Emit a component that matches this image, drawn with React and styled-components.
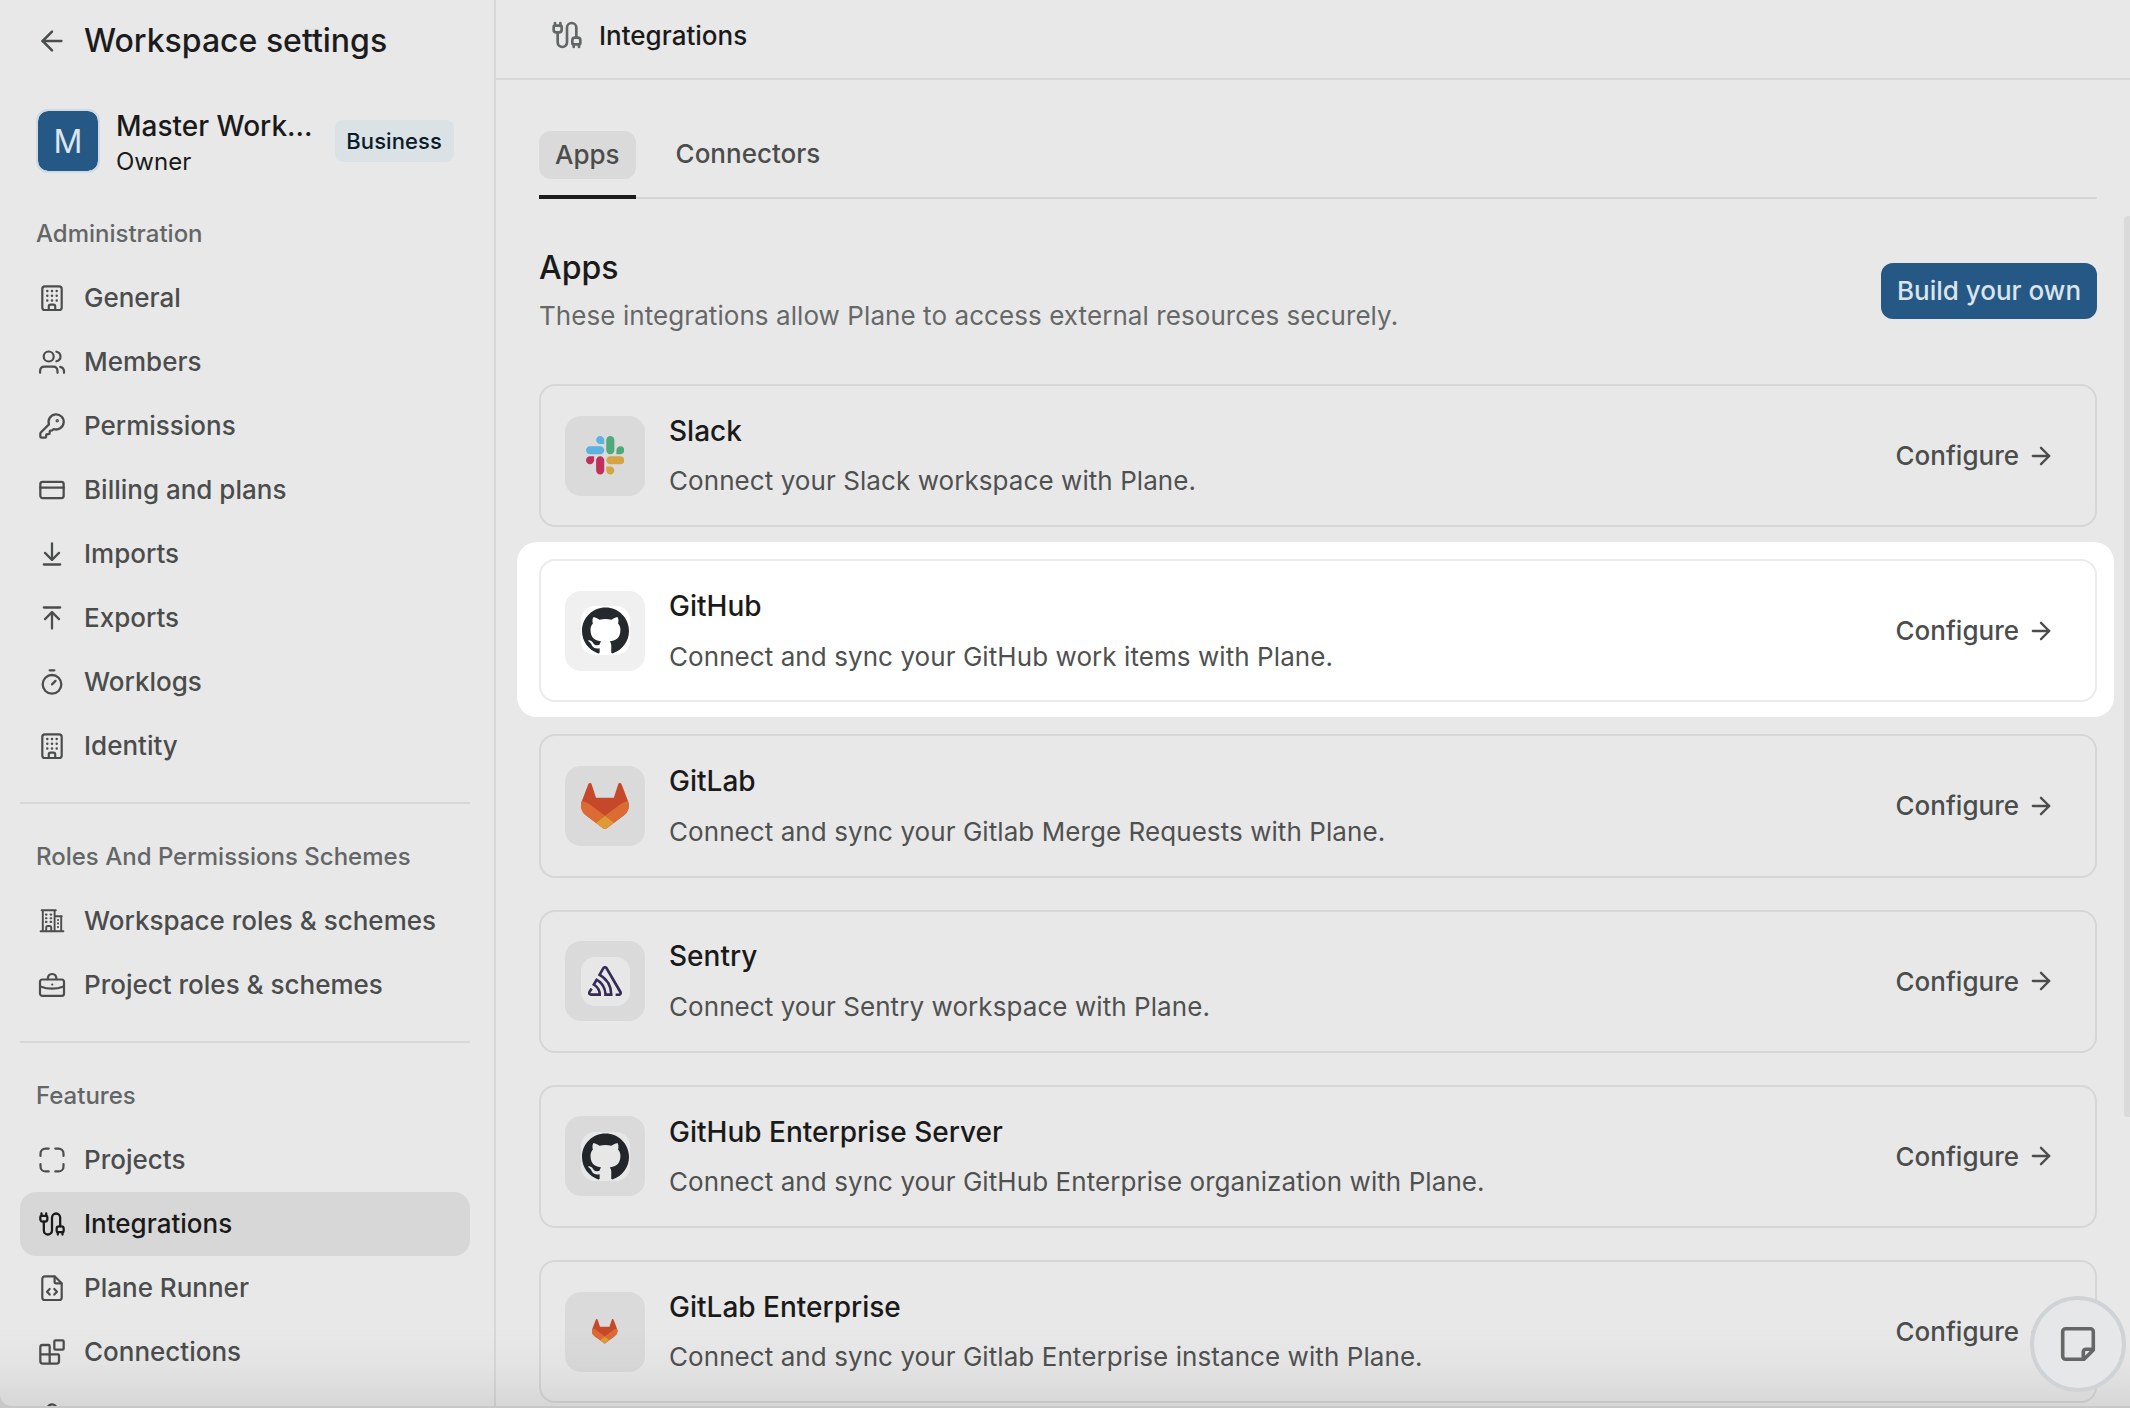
import React from 'react'
import styled, { createGlobalStyle } from 'styled-components'
import {
  ArrowDownToLine,
  ArrowLeft,
  ArrowRight,
  ArrowUpToLine,
  Blocks,
  Cable,
  CreditCard,
  KeyRound,
  Timer,
  Webhook
} from 'lucide-react'
import { SiGithub, SiSentry } from 'react-icons/si'

const GlobalStyle = createGlobalStyle`
  * {
    box-sizing: border-box;
  }

  body {
    margin: 0;
    background: #c8c8c8;
    font-family: 'Inter', sans-serif;
    overflow: hidden;
  }
`

const Page = styled.div`
  position: relative;
  display: flex;
  width: 100vw;
  height: calc(100vh - 2px);
  overflow: hidden;
  background: #e8e8e8;
  border-bottom-left-radius: 12px;
  color: #1a1a1a;
`

const Sidebar = styled.aside`
  width: 496px;
  flex-shrink: 0;
  padding: 0 24px 0 20px;
  border-right: 2px solid #d8d8d8;
`

const SidebarHeader = styled.div`
  display: flex;
  align-items: center;
  gap: 16px;
  height: 81px;
  padding-left: 16px;
  color: #4b4d4d;
`

const SidebarTitle = styled.h1`
  margin: 0;
  font-size: 32px;
  line-height: 40px;
  font-weight: 500;
  color: #1c1c1c;
`

const Workspace = styled.div`
  display: flex;
  align-items: center;
  height: 120px;
  margin-bottom: 13px;
  padding: 0 16px;
`

const Avatar = styled.div`
  display: flex;
  align-items: center;
  justify-content: center;
  width: 64px;
  height: 64px;
  margin-right: 16px;
  border: 2px solid #cfdbe4;
  border-radius: 12px;
  background: #255885;
  background-clip: padding-box;
  color: #dde6ed;
  font-size: 32px;
`

const WorkspaceInfo = styled.div`
  flex: 1;
  padding-top: 4px;
  white-space: nowrap;
`

const WorkspaceName = styled.div`
  font-size: 28px;
  line-height: 36px;
  font-weight: 500;
`

const WorkspaceRole = styled.div`
  font-size: 24px;
  line-height: 35px;
`

const Plan = styled.span`
  padding: 0 12px 0 11px;
  border-radius: 8px;
  background: #dae2e6;
  color: #0c1b28;
  font-size: 22px;
  line-height: 42px;
  font-weight: 500;
  letter-spacing: 0.1px;
`

const Group = styled.nav`
  & + & {
    margin-top: 24px;
    padding-top: 33px;
    border-top: 2px solid #d6d7d7;
  }
`

const GroupLabel = styled.div`
  margin-bottom: 12px;
  padding-left: 16px;
  color: #636666;
  font-size: 24px;
  line-height: 40px;
  font-weight: 500;
`

const NavItem = styled.a`
  display: flex;
  align-items: center;
  gap: 16px;
  height: 64px;
  padding-left: 16px;
  border-radius: 16px;
  background: ${props => props.$active ? '#d7d7d7' : 'transparent'};
  color: ${props => props.$active ? '#1a1a1a' : '#4b4d4d'};
  font-size: 26px;
  font-weight: 500;
  white-space: nowrap;
`

const IconBox = styled.span`
  display: flex;
  align-items: center;
  justify-content: center;
  flex-shrink: 0;
  width: 32px;
  height: 32px;
`

const NavLabel = styled.span`
  padding-bottom: 2px;
`

const Main = styled.main`
  flex: 1;
  min-width: 0;
`

const Header = styled.header`
  display: flex;
  align-items: center;
  gap: 16px;
  height: 80px;
  padding: 0 0 8px 55px;
  border-bottom: 2px solid #d8d8d8;
  color: #636666;
  font-size: 26px;
  font-weight: 500;

  & > span {
    color: #1a1a1a;
  }
`

const Content = styled.div`
  padding: 51px 33px 0 43px;
`

const Tabs = styled.div`
  display: flex;
  gap: 24px;
  height: 68px;
  border-bottom: 2px solid #d3d5d5;
`

const Tab = styled.div`
  height: 68px;
  border-bottom: 4px solid ${props => props.$active ? '#1c1c1c' : 'transparent'};

  & > span {
    display: block;
    padding: ${props => props.$active ? '0 16px' : '0 16px 2px'};
    border-radius: 12px;
    background: ${props => props.$active ? '#dadada' : 'transparent'};
    color: #4b4d4d;
    font-size: 26px;
    line-height: ${props => props.$active ? '48px' : '46px'};
    font-weight: 500;
  }
`

const Intro = styled.div`
  display: flex;
  align-items: center;
  justify-content: space-between;
  height: 185px;
  padding-bottom: 2px;
`

const IntroBody = styled.div`
  padding-top: 3px;
`

const IntroTitle = styled.h2`
  margin: 0;
  font-size: 32px;
  line-height: 48px;
  font-weight: 500;
`

const IntroText = styled.p`
  margin: 0;
  color: #666868;
  font-size: 26px;
  line-height: 48px;
  letter-spacing: 0.07px;
`

const PrimaryButton = styled.button`
  width: 216px;
  height: 56px;
  padding: 0;
  border: none;
  border-radius: 12px;
  background: #255885;
  color: #dbe4ec;
  font: 500 26px 'Inter', sans-serif;
`

const CardList = styled.div`
  display: flex;
  flex-direction: column;
  gap: 32px;
`

const Card = styled.div`
  display: flex;
  align-items: center;
  gap: 24px;
  height: 143.2px;
  padding: 0 40px 0 24px;
  border: 2px solid ${props => props.$highlighted ? '#ebebeb' : '#d5d6d6'};
  border-radius: 16px;
`

// white plate that reaches past the card into the gaps around it
const Spotlight = styled.div`
  margin: -17px -17px -15px -22px;
  padding: 17px 17px 15px 22px;
  border-radius: 20px;
  background: #fff;
`

const Logo = styled.div`
  display: flex;
  align-items: center;
  justify-content: center;
  width: 80px;
  height: 80px;
  border-radius: 16px;
  background: ${props => props.$highlighted ? '#f0f0f1' : '#dadada'};
`

const LogoPlate = styled.span`
  display: flex;
  align-items: center;
  justify-content: center;
  width: 49px;
  height: 49px;
  border-radius: 14px;
  background: ${props => props.$highlighted ? '#fff' : '#e7e7e8'};
`

const CardBody = styled.div`
  flex: 1;
`

const CardTitle = styled.h3`
  margin: 0 0 9.5px;
  font-size: 28px;
  line-height: 42px;
  font-weight: 500;
`

const CardText = styled.p`
  margin: 0;
  color: #4f5151;
  font-size: 26px;
  line-height: 40px;
  letter-spacing: 0.07px;
`

const Configure = styled.a`
  display: flex;
  align-items: center;
  gap: 8px;
  color: #4b4d4d;
  font-size: 26px;
  font-weight: 500;
`

const Scrollbar = styled.div`
  position: absolute;
  top: 216px;
  right: 0;
  width: 6px;
  height: 901px;
  border-radius: 4px 0 0 4px;
  background: #dadada;
`

const BottomFade = styled.div`
  position: absolute;
  right: 0;
  bottom: 0;
  left: 0;
  height: 76px;
  background: linear-gradient(rgba(0, 0, 0, 0), rgba(0, 0, 0, 0.02) 45%, rgba(0, 0, 0, 0.075));
`

const NoteButton = styled.button`
  position: absolute;
  right: 4px;
  bottom: 14px;
  display: flex;
  align-items: center;
  justify-content: center;
  width: 96px;
  height: 96px;
  padding: 0;
  border: 4px solid #d0d3d5;
  border-radius: 50%;
  background: #e5e7e8;
  color: #656767;
`

const Svg = ({ children, stroke = 2.2 }) => (
  <svg
    width='32'
    height='32'
    viewBox='0 0 32 32'
    fill='none'
    stroke='currentColor'
    strokeWidth={stroke}
    strokeLinecap='round'
    strokeLinejoin='round'
  >
    {children}
  </svg>
)

const OfficeIcon = () => (
  <Svg>
    <rect x='6.3' y='4.3' width='19.4' height='23.7' rx='2.6' />
    <path d='M12.8 27.5v-3.2a1.6 1.6 0 0 1 1.6-1.6h3.2a1.6 1.6 0 0 1 1.6 1.6v3.2' />
    <path strokeWidth='2.5' d='M11.3 9h.01M16 9h.01M20.7 9h.01M11.3 13.7h.01M16 13.7h.01M20.7 13.7h.01M11.3 18.4h.01M16 18.4h.01M20.7 18.4h.01' />
  </Svg>
)

const MembersIcon = () => (
  <Svg>
    <circle cx='12.7' cy='10.5' r='5' />
    <path d='M4.1 26.8v-1.6c0-3 1.9-4.5 4.5-4.5h8.4c2.7 0 4.5 1.6 4.5 4.5v1.6' />
    <path d='M20.4 5.7c2.6.6 4.1 2.4 4.1 4.8s-1.5 4.1-4.1 4.8' />
    <path d='M24.2 20.9c2.4.7 3.8 2.2 3.8 4.5v1.4' />
  </Svg>
)

const TowersIcon = () => (
  <Svg stroke={1.9}>
    <path d='M4.6 26.2h22.8M5.6 5.2h14.2M6.8 5.2v21M18.6 5.2v21M18.6 11.2h7.2M25.2 11.2v15' />
    <path d='M10.2 26v-3.3a1.7 1.7 0 0 1 1.7-1.7h1.6a1.7 1.7 0 0 1 1.7 1.7v3.3' />
    <path strokeWidth='2.1' d='M9.9 9.6h.6M14.6 9.6h.6M9.9 13.2h.6M14.6 13.2h.6M9.9 16.9h.6M14.6 16.9h.6M22 15h.01M22 18.4h.01M22 22h.01' />
  </Svg>
)

const BriefcaseIcon = () => (
  <Svg>
    <rect x='4' y='10.5' width='24' height='16.4' rx='2.4' />
    <path d='M11.8 10.2c0-3.2 1.6-5.2 4.3-5.2s4.3 2 4.3 5.2' />
    <path d='M4.4 17.4c7 2.8 16.2 2.8 23.2 0' />
    <path d='M16.2 15.6h.01' />
  </Svg>
)

const ProjectsIcon = () => (
  <Svg>
    <path d='M4.5 12V9.6a5 5 0 0 1 5-5h3.2M19.3 4.6h3.2a5 5 0 0 1 5 5V12M27.5 20v2.4a5 5 0 0 1-5 5h-3.2M12.7 27.4H9.5a5 5 0 0 1-5-5V20' />
  </Svg>
)

const RunnerIcon = () => (
  <Svg>
    <path d='M18.6 4.3H8.9a2.6 2.6 0 0 0-2.6 2.6v18.5A2.6 2.6 0 0 0 8.9 28h14.2a2.6 2.6 0 0 0 2.6-2.6V11.2z' />
    <path d='M18.6 4.6v5.2a1.5 1.5 0 0 0 1.5 1.5h5.3' />
    <path d='m13.7 17-2.7 2.8 2.7 2.8M18.3 17l2.7 2.8-2.7 2.8' />
  </Svg>
)

const SlackLogo = () => (
  <svg width='38.5' height='38.5' viewBox='0 0 122.8 122.8'>
    <path fill='#c12f5b' d='M25.8 77.6c0 7.1-5.8 12.9-12.9 12.9S0 84.7 0 77.6s5.8-12.9 12.9-12.9h12.9v12.9zM32.3 77.6c0-7.1 5.8-12.9 12.9-12.9s12.9 5.8 12.9 12.9v32.3c0 7.1-5.8 12.9-12.9 12.9s-12.9-5.8-12.9-12.9V77.6z' />
    <path fill='#5bb2de' d='M45.2 25.8c-7.1 0-12.9-5.8-12.9-12.9S38.1 0 45.2 0s12.9 5.8 12.9 12.9v12.9H45.2zM45.2 32.3c7.1 0 12.9 5.8 12.9 12.9s-5.8 12.9-12.9 12.9H12.9C5.8 58.1 0 52.3 0 45.2s5.8-12.9 12.9-12.9h32.3z' />
    <path fill='#4eaa7a' d='M97 45.2c0-7.1 5.8-12.9 12.9-12.9s12.9 5.8 12.9 12.9-5.8 12.9-12.9 12.9H97V45.2zM90.5 45.2c0 7.1-5.8 12.9-12.9 12.9s-12.9-5.8-12.9-12.9V12.9C64.7 5.8 70.5 0 77.6 0s12.9 5.8 12.9 12.9v32.3z' />
    <path fill='#d5a443' d='M77.6 97c7.1 0 12.9 5.8 12.9 12.9s-5.8 12.9-12.9 12.9-12.9-5.8-12.9-12.9V97h12.9zM77.6 90.5c-7.1 0-12.9-5.8-12.9-12.9s5.8-12.9 12.9-12.9h32.3c7.1 0 12.9 5.8 12.9 12.9s-5.8 12.9-12.9 12.9H77.6z' />
  </svg>
)

const GitlabLogo = ({ size }) => (
  <svg width={size} height={size * 0.96} viewBox='0 0 25 24'>
    <path fill='#c6482b' d='m24.507 9.5-.034-.09L21.082.562a.896.896 0 0 0-1.694.091l-2.29 7.01H7.825L5.535.653a.898.898 0 0 0-1.694-.09L.451 9.411.416 9.5a6.297 6.297 0 0 0 2.09 7.278l.012.01.03.022 5.16 3.867 2.56 1.935 1.554 1.176a1.051 1.051 0 0 0 1.268 0l1.555-1.176 2.56-1.935 5.197-3.89.014-.01A6.297 6.297 0 0 0 24.507 9.5Z' />
    <path fill='#dc6b33' d='m24.507 9.5-.034-.09a11.44 11.44 0 0 0-4.56 2.051l-7.447 5.632 4.742 3.584 5.197-3.89.014-.01A6.297 6.297 0 0 0 24.507 9.5Z' />
    <path fill='#dd9a37' d='m7.707 20.677 2.56 1.935 1.555 1.176a1.051 1.051 0 0 0 1.268 0l1.555-1.176 2.56-1.935-4.743-3.584-4.755 3.584Z' />
    <path fill='#dc6b33' d='M5.01 11.461a11.43 11.43 0 0 0-4.56-2.05L.416 9.5a6.297 6.297 0 0 0 2.09 7.278l.012.01.03.022 5.16 3.867 4.745-3.584-7.444-5.632Z' />
  </svg>
)

const NoteIcon = () => (
  <svg width='36' height='36' viewBox='0 0 36 36' fill='none' stroke='currentColor' strokeWidth='3.6' strokeLinejoin='round'>
    <path d='M5.7 2.7h24.6a3 3 0 0 1 3 3v18.3l-9.3 9.3H5.700a3 3 0 0 1-3-3V5.700a3 3 0 0 1 3-3z' />
    <path d='M23.3 33v-7.2a2.5 2.5 0 0 1 2.5-2.5h7.2' />
  </svg>
)

const lucide = Icon => () => <Icon size={28} strokeWidth={1.95} />

const groups = [
  {
    label: 'Administration',
    items: [
      { name: 'General', icon: OfficeIcon },
      { name: 'Members', icon: MembersIcon },
      { name: 'Permissions', icon: lucide(KeyRound) },
      { name: 'Billing and plans', icon: lucide(CreditCard) },
      { name: 'Imports', icon: lucide(ArrowDownToLine) },
      { name: 'Exports', icon: lucide(ArrowUpToLine) },
      { name: 'Worklogs', icon: lucide(Timer) },
      { name: 'Identity', icon: OfficeIcon }
    ]
  },
  {
    label: 'Roles And Permissions Schemes',
    items: [
      { name: 'Workspace roles & schemes', icon: TowersIcon },
      { name: 'Project roles & schemes', icon: BriefcaseIcon }
    ]
  },
  {
    label: 'Features',
    items: [
      { name: 'Projects', icon: ProjectsIcon },
      { name: 'Integrations', icon: lucide(Cable), active: true },
      { name: 'Plane Runner', icon: RunnerIcon },
      { name: 'Connections', icon: lucide(Blocks) },
      { name: '', icon: lucide(Webhook) }
    ]
  }
]

const apps = [
  { name: 'Slack', text: 'Connect your Slack workspace with Plane.', logo: <SlackLogo /> },
  {
    name: 'GitHub',
    text: 'Connect and sync your GitHub work items with Plane.',
    logo: <SiGithub size={47} color='#25292d' />,
    plate: true,
    highlighted: true
  },
  { name: 'GitLab', text: 'Connect and sync your Gitlab Merge Requests with Plane.', logo: <GitlabLogo size={48} /> },
  {
    name: 'Sentry',
    text: 'Connect your Sentry workspace with Plane.',
    logo: <SiSentry size={34} color='#352b55' />,
    plate: true
  },
  {
    name: 'GitHub Enterprise Server',
    text: 'Connect and sync your GitHub Enterprise organization with Plane.',
    logo: <SiGithub size={47} color='#22262a' />,
    plate: true
  },
  {
    name: 'GitLab Enterprise',
    text: 'Connect and sync your Gitlab Enterprise instance with Plane.',
    logo: <GitlabLogo size={25.5} />
  }
]

const AppCard = ({ name, text, logo, plate, highlighted }) => {
  const card = (
    <Card $highlighted={highlighted}>
      <Logo $highlighted={highlighted}>
        {plate ? <LogoPlate $highlighted={highlighted}>{logo}</LogoPlate> : logo}
      </Logo>
      <CardBody>
        <CardTitle>{name}</CardTitle>
        <CardText>{text}</CardText>
      </CardBody>
      <Configure>
        Configure
        <ArrowRight size={28} strokeWidth={2} />
      </Configure>
    </Card>
  )

  return highlighted ? <Spotlight>{card}</Spotlight> : card
}

const App = () => (
  <>
    <GlobalStyle />
    <Page>
      <Sidebar>
        <SidebarHeader>
          <ArrowLeft size={32} strokeWidth={1.9} />
          <SidebarTitle>Workspace settings</SidebarTitle>
        </SidebarHeader>
        <Workspace>
          <Avatar>M</Avatar>
          <WorkspaceInfo>
            <WorkspaceName>Master Work...</WorkspaceName>
            <WorkspaceRole>Owner</WorkspaceRole>
          </WorkspaceInfo>
          <Plan>Business</Plan>
        </Workspace>
        {groups.map(group => (
          <Group key={group.label}>
            <GroupLabel>{group.label}</GroupLabel>
            {group.items.map(({ name, icon: Icon, active }) => (
              <NavItem key={name} $active={active}>
                <IconBox><Icon /></IconBox>
                <NavLabel>{name}</NavLabel>
              </NavItem>
            ))}
          </Group>
        ))}
      </Sidebar>
      <Main>
        <Header>
          <Cable size={32} strokeWidth={2} />
          <span>Integrations</span>
        </Header>
        <Content>
          <Tabs>
            <Tab $active><span>Apps</span></Tab>
            <Tab><span>Connectors</span></Tab>
          </Tabs>
          <Intro>
            <IntroBody>
              <IntroTitle>Apps</IntroTitle>
              <IntroText>These integrations allow Plane to access external resources securely.</IntroText>
            </IntroBody>
            <PrimaryButton>Build your own</PrimaryButton>
          </Intro>
          <CardList>
            {apps.map(app => <AppCard key={app.name} {...app} />)}
          </CardList>
        </Content>
      </Main>
      <Scrollbar />
      <BottomFade />
      <NoteButton><NoteIcon /></NoteButton>
    </Page>
  </>
)

export default App
